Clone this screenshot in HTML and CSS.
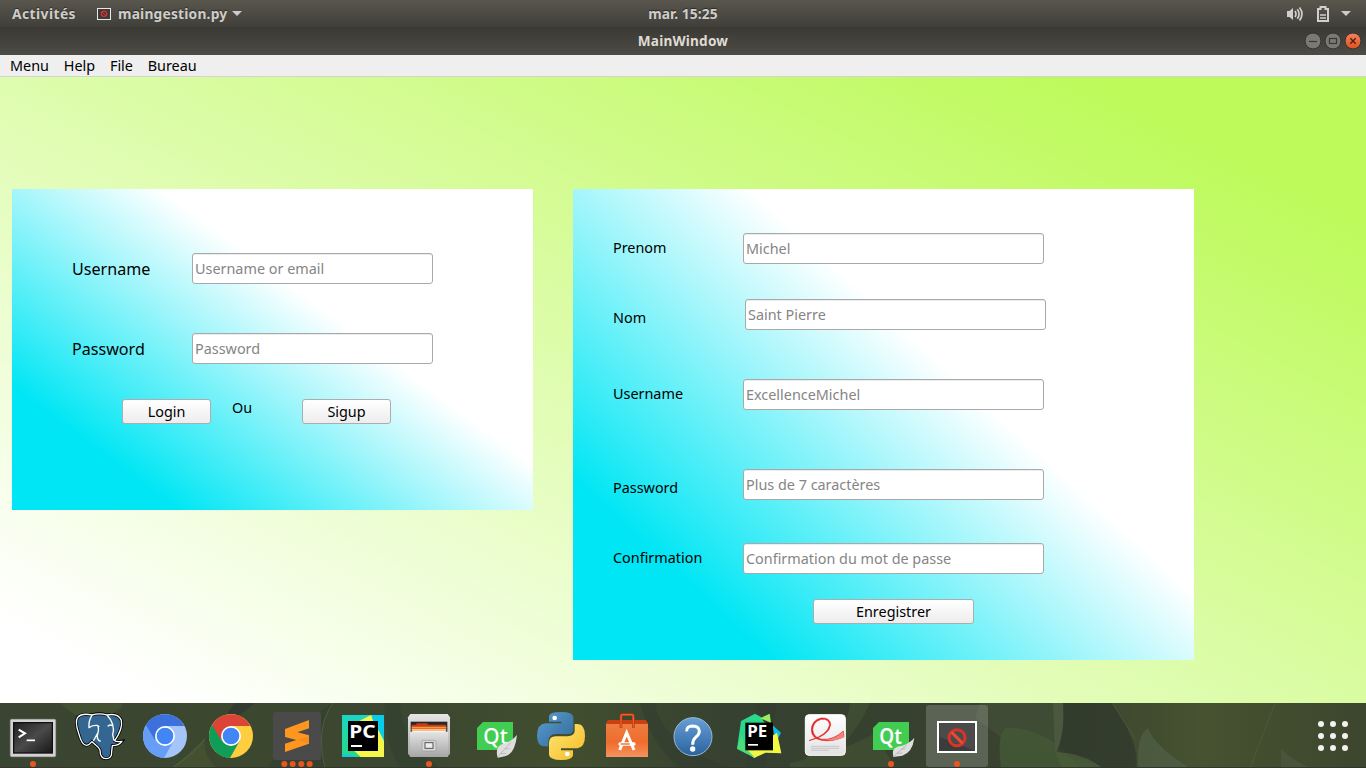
FILE: index.html
```html
<!DOCTYPE html>
<html lang="fr">
<head>
<meta charset="utf-8">
<title>MainWindow</title>
<link rel="stylesheet" href="styles.css">
</head>
<body>
<header class="topbar">
  <div class="topbar-left">
    <span class="activities">Activités</span>
    <svg class="app-icon" viewBox="0 0 14 12"><rect x=".5" y=".5" width="13" height="11" fill="#3b3b3b" stroke="#e8e8e8"/><circle cx="7" cy="5.8" r="2.7" fill="#54302d" stroke="#d8342d" stroke-width="1.2"/><path d="M5 4l4 4" stroke="#d8342d"/></svg>
    <span class="app-name">maingestion.py</span>
    <svg class="caret" viewBox="0 0 10 5"><path d="M0 0h10L5 5z" fill="#ccc"/></svg>
  </div>
  <span class="clock">mar. 15:25</span>
  <div class="tray">
    <svg width="18" height="16" viewBox="0 0 18 16"><path d="M1 5h2.500L7 2v12l-3.500-3H1z" fill="#cfcfcf"/><path d="M9 5q2 3 0 6M11.300 3.200q3.600 4.800 0 9.600M13.500 1.500q5 6.500 0 13" fill="none" stroke="#cfcfcf" stroke-width="1.700"/></svg>
    <svg width="12" height="16" viewBox="0 0 12 16"><path d="M1 15V3h2.500V1h5v2H11v12z" fill="none" stroke="#cfcfcf" stroke-width="2"/><path d="M3 9h6M3 12h6" stroke="#cfcfcf" stroke-width="1.400"/></svg>
    <svg class="caret" viewBox="0 0 10 5"><path d="M0 0h10L5 5z" fill="#ccc"/></svg>
  </div>
</header>
<div class="titlebar">
  <span class="title">MainWindow</span>
  <div class="controls">
    <svg viewBox="0 0 18 18"><circle cx="9" cy="9" r="8" fill="#7a7973" stroke="#34332f"/><path d="M5 9.500h8" stroke="#393834" stroke-width="1.200"/></svg>
    <svg viewBox="0 0 18 18"><circle cx="9" cy="9" r="8" fill="#7a7973" stroke="#34332f"/><rect x="5.500" y="6.500" width="7" height="5" fill="none" stroke="#393834" stroke-width="1.200"/></svg>
    <svg viewBox="0 0 18 18"><defs><linearGradient id="close" x2="0" y2="1"><stop stop-color="#f4835f"/><stop offset="1" stop-color="#e4501c"/></linearGradient></defs><circle cx="9" cy="9" r="8" fill="url(#close)" stroke="#34332f"/><path d="M6.300 6.300l5.400 5.400M11.700 6.300l-5.400 5.400" stroke="#4b2212" stroke-width="1.400"/></svg>
  </div>
</div>
<nav class="menubar"><span>Menu</span><span>Help</span><span>File</span><span>Bureau</span></nav>
<main class="workspace">
  <svg class="fill" preserveAspectRatio="none" viewBox="0 0 1 1"><defs><linearGradient id="lime" x1="0.04" y1="0.91" x2="0.91" y2="0.135"><stop stop-color="#fff"/><stop offset="1" stop-color="#bdfa5a"/></linearGradient></defs><rect width="1" height="1" fill="url(#lime)"/></svg>
  <section class="panel login">
    <svg class="fill" preserveAspectRatio="none" viewBox="0 0 1 1"><defs><linearGradient id="cyan" x1="0.159" y1="0.807" x2="0.63" y2="0.415"><stop stop-color="#00e6f4"/><stop offset="1" stop-color="#fff"/></linearGradient></defs><rect width="1" height="1" fill="url(#cyan)"/></svg>
    <div class="row"><label class="u">Username</label><input type="text" placeholder="Username or email"></div>
    <div class="row"><label class="p">Password</label><input type="text" placeholder="Password"></div>
    <div class="actions"><button>Login</button><span>Ou</span><button>Sigup</button></div>
  </section>
  <section class="panel register">
    <svg class="fill" preserveAspectRatio="none" viewBox="0 0 1 1"><rect width="1" height="1" fill="url(#cyan)"/></svg>
    <div class="row"><label>Prenom</label><input type="text" placeholder="Michel"></div>
    <div class="row nom"><label class="low">Nom</label><input type="text" placeholder="Saint Pierre"></div>
    <div class="row user"><label>Username</label><input type="text" placeholder="ExcellenceMichel"></div>
    <div class="row pass"><label class="low">Password</label><input type="text" placeholder="Plus de 7 caractères"></div>
    <div class="row conf"><label>Confirmation</label><input type="text" placeholder="Confirmation du mot de passe"></div>
    <button class="save">Enregistrer</button>
  </section>
</main>
<footer class="dock">
  <svg class="fill" preserveAspectRatio="none" viewBox="0 0 1366 65">
    <defs><linearGradient id="dockbg"><stop stop-color="#3a4432"/><stop offset=".15" stop-color="#3b472f"/><stop offset=".3" stop-color="#3b4730"/><stop offset=".42" stop-color="#414e2e"/><stop offset=".53" stop-color="#364131"/><stop offset=".62" stop-color="#36402f"/><stop offset=".78" stop-color="#39432f"/><stop offset=".88" stop-color="#465230"/><stop offset="1" stop-color="#3d462e"/></linearGradient></defs>
    <rect width="1366" height="65" fill="url(#dockbg)"/>
    <path d="M60 0Q90 30 122 4V0zM205 35Q190 50 172 65H216Q202 50 205 35z" fill="#4c5c34" opacity=".5"/>
    <path d="M235 0h20L206 38z" fill="#30342f" opacity=".7"/>
    <path d="M333 0Q315 25 325 65H268Q290 25 333 0zM385 0Q382 35 400 65H440Q400 35 400 0z" fill="#344131" opacity=".8"/>
    <path d="M333 0Q315 25 325 65M205 36Q195 50 172 65" fill="none" stroke="#65704f" opacity=".5"/>
    <path d="M640 0Q650 40 680 65H730Q660 40 655 0zM757 0h20l-12 65h-20z" fill="#2f3930" opacity=".5"/>
    <path d="M870 0Q850 45 810 65H790Q850 30 850 0zM790 60Q840 50 875 30L895 65H790z" fill="#4a5c37" opacity=".45"/>
    <path d="M980 0h84l-5 49H1020L975 15z" fill="#46543a" opacity=".55"/>
    <path d="M1001 65Q995 20 1013 25Q1050 27 1080 65z" fill="#435936" opacity=".8"/>
    <path d="M1053 0h10q3 35-8 50z" fill="#4a583d"/>
    <path d="M1112 0Q1140 40 1136 65H1105L1057 48Q1065 30 1063 0z" fill="#30392e" opacity=".75"/>
    <path d="M1055 49Q1085 50 1102 65H1062z" fill="#485c39" opacity=".8"/>
    <path d="M1138 65Q1136 33 1148 25Q1154 43 1190 65z" fill="#4e5d42" opacity=".85"/>
    <path d="M1112 0L1136 37M1275 0L1250 65" stroke="#5d6944" opacity=".45"/>
    <path d="M1281 65V45Q1290 56 1310 65z" fill="#4b563e" opacity=".8"/>
    <rect y="64" width="1366" height="1" fill="#33352f"/>
  </svg>
  <div class="apps">
    <svg viewBox="0 9 198 195"><defs><linearGradient id="term" x2="1" y2="1"><stop stop-color="#222"/><stop offset=".5" stop-color="#4a4a4a"/><stop offset="1" stop-color="#191919"/></linearGradient><linearGradient id="grey" x2="0" y2="1"><stop stop-color="#e5e5e5"/><stop offset="1" stop-color="#a5a5a5"/></linearGradient></defs><rect x="31" y="58" width="136" height="112" rx="4" fill="#d4d1d4" stroke="#aaa" stroke-width="2"/><rect x="39" y="66" width="120" height="95" fill="#111"/><rect x="43" y="70" width="112" height="87" fill="url(#term)"/><path d="M56 89l19 11-19 12" fill="none" stroke="#fff" stroke-width="6"/><path d="M80 121h25" stroke="#fff" stroke-width="5"/><circle class="dot" cx="99" cy="192" r="9"/></svg>
    <svg viewBox="198 9 198 195"><path d="M276 45Q246 38 233 52Q224 65 236 100Q246 137 260 136Q268 135 276 125L288 136Q296 142 300 150Q300 176 318 176Q336 176 335 155L337 137Q356 137 366 124Q348 127 344 122Q369 86 364 61Q354 38 321 45Q298 38 276 45z" fill="#336791" stroke="#000" stroke-width="9"/><path d="M276 45Q246 38 233 52Q224 65 236 100Q246 137 260 136Q268 135 276 125L288 136Q296 142 300 150Q300 176 318 176Q336 176 335 155L337 137Q356 137 366 124Q348 127 344 122Q369 86 364 61Q354 38 321 45Q298 38 276 45zM276 46Q265 62 267 83Q275 75 291 76Q298 82 294 98L280 123M294 98Q287 118 302 124M321 45Q347 73 338 104L342 122M323 79Q329 72 338 77M290 76Q295 76 298 81" fill="none" stroke="#fff" stroke-width="4" stroke-linejoin="round"/></svg>
    <svg viewBox="396 9 198 195"><circle cx="495" cy="108" r="66" fill="#a4c4fa"/><path d="M438 75A66 66 0 0 0 492 174L521 123 495 108z" fill="#669df6"/><path d="M438 75A66 66 0 0 1 553 78H495L465 120z" fill="#3c70dc"/><circle cx="495" cy="108" r="30" fill="#fff"/><circle cx="495" cy="108" r="25" fill="#4286f5"/></svg>
    <svg viewBox="594 9 198 195"><circle cx="693" cy="108" r="66" fill="#ffcd40"/><path d="M636 75A66 66 0 0 0 690 174L719 123 693 108z" fill="#109d58"/><path d="M636 75A66 66 0 0 1 751 78H693L663 120z" fill="#db4437"/><circle cx="693" cy="108" r="30" fill="#fff"/><circle cx="693" cy="108" r="25" fill="#4286f5"/></svg>
    <svg viewBox="12 9 198 195"><rect x="39" y="36" width="144" height="144" rx="8" fill="#4a4a4a"/><path d="M75 87L147 60V85L112 97 147 106V131L75 156V131L109 120 75 111z" fill="#ff9620"/><path d="M112 120l35-12v23z" fill="#e57c12" opacity=".3"/><g class="dot"><circle cx="73" cy="192" r="9"/><circle cx="98" cy="192" r="9"/><circle cx="124" cy="192" r="9"/><circle cx="149" cy="192" r="9"/></g></svg>
    <svg viewBox="210 9 198 195"><defs><linearGradient id="pcg" x2="0" y2="1"><stop stop-color="#1cd5c4"/><stop offset="1" stop-color="#26da86"/></linearGradient></defs><path d="M246 45H372V171H246z" fill="url(#pcg)"/><path d="M338 45h34v126h-30z" fill="#0bcbea"/><path d="M292 66L333 45 340 65 358 95 372 123V171H302L280 150H264z" fill="#f5f84a"/><path d="M246 160l55 11h-55z" fill="#18c9db"/><rect x="264" y="63" width="90" height="90"/><text x="268" y="114" class="logo" font-size="54" textLength="79" lengthAdjust="spacingAndGlyphs">PC</text><rect x="273" y="135" width="33" height="6" fill="#fff"/></svg>
    <svg viewBox="408 9 198 195"><path d="M444 52l7-10h112l7 10v109l-8 10H452l-8-10z" fill="url(#grey)"/><rect x="452" y="65" width="110" height="35" fill="#282828"/><path d="M455 74h12l4-4h30l4 4h53v24H455z" fill="#c73c16"/><path d="M455 80h104v5H455z" fill="#f79b39"/><path d="M455 86h104v6H455z" fill="#ffc477"/><path d="M457 92h100v5H457z" fill="#fff"/><rect x="450" y="95" width="114" height="76" fill="url(#grey)"/><rect x="486" y="121" width="42" height="32" rx="4" fill="#d6d6d6" stroke="#999" stroke-width="2"/><rect x="495" y="128" width="24" height="17" fill="#eee" stroke="#555" stroke-width="3"/><circle class="dot" cx="507" cy="192" r="9"/></svg>
    <svg viewBox="606 9 198 195"><path d="M669 66H759V150H651V84z" fill="#41cd52"/><text x="670" y="131" class="qt" textLength="73" lengthAdjust="spacingAndGlyphs">Qt</text><path d="M771 105Q765 163 735 169L713 173Q705 146 722 134Q752 128 771 105z" fill="#dedede"/><path d="M713 170L752 128M723 161l15-1M735 147l13-2" fill="none" stroke="#999" stroke-width="1.500"/></svg>
    <svg viewBox="9 9 198 195"><defs><linearGradient id="pyb" x2="1" y2="1"><stop stop-color="#5b9fd3"/><stop offset="1" stop-color="#306796"/></linearGradient><linearGradient id="pyy" x2="1" y2="1"><stop stop-color="#ffe874"/><stop offset="1" stop-color="#f4b925"/></linearGradient></defs><path d="M72 49Q73 36 107 36Q144 36 145 52V86Q145 101 131 102H92Q73 103 70 121V139H58Q36 138 36 107Q36 72 62 70H109V65H72z" fill="url(#pyb)"/><path d="M144 166Q143 180 109 180Q73 179 72 164V128Q73 109 92 109H128Q148 108 149 94V72H158Q180 73 180 108Q180 142 157 145H108V151H144z" fill="url(#pyy)"/><circle cx="89" cy="54" r="7" fill="#fff"/><circle cx="127" cy="162" r="7" fill="#fff"/></svg>
    <svg viewBox="207 9 198 195"><defs><linearGradient id="bag" x2="0" y2="1"><stop stop-color="#ee8146"/><stop offset=".6" stop-color="#ef6c2d"/><stop offset="1" stop-color="#f6935f"/></linearGradient></defs><path d="M250 60H361L369 72V171H243V72z" fill="url(#bag)"/><path d="M250 60H361L369 72H243z" fill="#c9410f"/><path d="M288 83V48Q288 44 295 44H318Q325 44 325 48V83" fill="none" stroke="#b9340d" stroke-width="8"/><path d="M288 82V48Q288 44 295 44H318Q325 44 325 48V82" fill="none" stroke="#ef6030" stroke-width="4"/><path d="M284 150L305 98 327 150" fill="none" stroke="#fff" stroke-width="9"/><rect x="280" y="127" width="52" height="10" rx="5" fill="#fff"/><path d="M287 132h27" stroke="#ed681e" stroke-width="4"/></svg>
    <svg viewBox="405 9 198 195"><defs><linearGradient id="help" x2="0" y2="1"><stop stop-color="#67a0d8"/><stop offset="1" stop-color="#29629d"/></linearGradient></defs><circle cx="504" cy="110" r="57" fill="url(#help)" stroke="#9cb9cf" stroke-width="3"/><path d="M485 94Q484 78 503 78Q523 79 523 94Q523 104 512 112Q503 119 503 134" fill="none" stroke="#fff" stroke-width="9"/><circle cx="503" cy="147" r="8" fill="#fff"/></svg>
    <svg viewBox="603 9 198 195"><path d="M648 63L690 41 708 51 735 95 690 174 636 146z" fill="#29d889"/><path d="M705 55L734 41 738 68z" fill="#98ee61"/><path d="M742 75L768 98 753 127z" fill="#0cbde7"/><path d="M660 150L699 135 756 98 769 160 722 158 687 174z" fill="#f2f744"/><path d="M636 146l13-42 14 42 28 28z" fill="#49dc7b"/><rect x="661" y="68" width="83" height="83"/><text x="667" y="110" class="logo" font-size="46" textLength="60" lengthAdjust="spacingAndGlyphs">PE</text><rect x="669" y="132" width="30" height="5" fill="#fff"/></svg>
    <svg viewBox="6 9 198 195"><defs><linearGradient id="paper" x2="0" y2="1"><stop stop-color="#fff"/><stop offset="1" stop-color="#e2e2e2"/></linearGradient></defs><rect x="46" y="44" width="120" height="122" rx="11" fill="url(#paper)" stroke="#fff" stroke-width="3"/><path d="M57 122Q113 105 119 74Q115 55 94 58Q69 65 68 89Q70 113 95 118Q130 121 160 93L162 110Q130 126 96 121Q65 116 64 90Q65 60 94 54Q119 52 122 73Q119 107 57 122z" fill="#e32222" stroke="#e32222" stroke-width="2"/><path d="M105 119Q135 119 160 93L162 112Q132 126 105 119z" fill="#f28480"/><path d="M63 139h85M63 145h85M63 151h54" stroke="#b6b6b6" stroke-width="2"/></svg>
    <svg viewBox="204 9 198 195"><path d="M267 66H357V150H249V84z" fill="#41cd52"/><text x="268" y="131" class="qt qt-bold" textLength="68" lengthAdjust="spacingAndGlyphs">Qt</text><path d="M373 114Q367 158 337 167L310 171Q304 147 322 140Q352 137 373 114z" fill="#dedede"/><path d="M311 169L350 135M321 160l16-1M333 148l13-2" fill="none" stroke="#999" stroke-width="1.500"/><circle class="dot" cx="303" cy="192" r="9"/></svg>
    <svg viewBox="402 9 198 195"><rect x="408" y="15" width="186" height="186" rx="9" fill="#fff" opacity=".18"/><rect x="444" y="66" width="114" height="90" fill="#3c3c3c" stroke="#fff" stroke-width="6"/><path d="M448 70h106v82L448 110z" fill="#fff" opacity=".08"/><circle cx="501" cy="113" r="24" fill="none" stroke="#d93426" stroke-width="9"/><path d="M484 96l34 34" stroke="#ed4936" stroke-width="9"/><circle class="dot" cx="501" cy="192" r="9"/></svg>
  </div>
  <svg class="show-apps" viewBox="0 0 30 30"><g fill="#f2f2f0"><circle cx="3" cy="3" r="3"/><circle cx="15" cy="3" r="3"/><circle cx="27" cy="3" r="3"/><circle cx="3" cy="15" r="3"/><circle cx="15" cy="15" r="3"/><circle cx="27" cy="15" r="3"/><circle cx="3" cy="27" r="3"/><circle cx="15" cy="27" r="3"/><circle cx="27" cy="27" r="3"/></g></svg>
</footer>
</body>
</html>
```
FILE: styles.css
```css
* { box-sizing: border-box; }
body {
  margin: 0;
  width: 1366px;
  height: 768px;
  overflow: hidden;
  display: flex;
  flex-direction: column;
  font: 14.4px "Noto Sans", "Open Sans", sans-serif;
  color: #000;
}
svg { display: block; flex: none; }
.fill { position: absolute; inset: 0; width: 100%; height: 100%; z-index: -1; }

.topbar {
  height: 27px;
  display: grid;
  grid-template-columns: 1fr auto 1fr;
  align-items: center;
  background: linear-gradient(#59564d, #403f3a);
  color: #cfcdc8;
  font-weight: 700;
  font-size: 13.8px;
  text-shadow: 0 -1px 1px #2b2a27;
}
.topbar-left { display: flex; align-items: center; padding-left: 12px; }
.activities { width: 85px; letter-spacing: .45px; }
.app-icon { width: 14px; height: 12px; margin-right: 7px; }
.app-name { width: 114px; letter-spacing: .2px; }
.clock { font-size: 13.8px; padding-bottom: 1px; letter-spacing: .1px; }
.caret { width: 10px; height: 5px; }
.tray { display: flex; align-items: center; justify-content: flex-end; padding-right: 15px; }
.tray svg:first-child { margin-right: 13px; }
.tray .caret { margin-left: 12px; }

.titlebar {
  height: 28px;
  display: grid;
  grid-template-columns: 1fr auto 1fr;
  align-items: center;
  background: linear-gradient(#3a3934, #4d4b45);
  color: #dfdbd2;
  font-weight: 700;
  font-size: 13.6px;
  letter-spacing: .2px;
}
.title { grid-column: 2; padding-bottom: 1px; }
.controls { display: flex; gap: 2px; justify-content: flex-end; padding-right: 4px; }
.controls svg { width: 18px; height: 18px; }

.menubar {
  height: 22px;
  display: flex;
  gap: 14.8px;
  padding-left: 10px;
  line-height: 21px;
  background: #efefef;
  border-bottom: 1px solid #d3d3d3;
}

.workspace {
  position: relative;
  z-index: 0;
  height: 626px;
  display: flex;
  align-items: flex-start;
  gap: 40px;
  padding: 112px 0 0 12px;
}
.panel { position: relative; z-index: 0; }
.row { display: flex; height: 31px; }
label { line-height: 30px; flex: none; }
input {
  height: 31px;
  margin: 0;
  padding: 0 2px;
  border: 1px solid #a9a9a9;
  border-radius: 3px;
  background: #fff;
  box-shadow: inset 0 1px #ececec;
  font: inherit;
}
input::placeholder { color: #858585; opacity: 1; }
button {
  height: 25px;
  padding: 0;
  border: 1px solid #adadad;
  border-radius: 3px;
  background: linear-gradient(#fff, #ededed);
  font: inherit;
  line-height: 23px;
  color: #000;
}
.login { width: 521px; height: 321px; padding: 64px 0 0 60px; }
.login .row { margin-bottom: 49px; }
.login .row + .row { margin-bottom: 35px; }
.login label { width: 120px; font-size: 16.1px; line-height: 32px; }
.login input { width: 241px; }
.actions { display: flex; padding-left: 50px; }
.actions button { width: 89px; }
.actions span { width: 91px; padding-left: 21px; line-height: 17px; }

.register { width: 621px; height: 471px; padding: 44px 0 0 40px; }
.register label { width: 130px; }
.register input { width: 301px; }
.register .low { padding-top: 4px; }
.nom { margin-top: 35px; }
.nom input { margin-left: 2px; }
.user { margin-top: 49px; }
.pass { margin-top: 59px; }
.conf { margin-top: 43px; }
.save { display: block; width: 161px; margin: 25px 0 0 200px; }

.dock {
  position: relative;
  z-index: 0;
  height: 65px;
  display: flex;
  align-items: center;
  justify-content: space-between;
  padding-right: 18px;
}
.apps { display: flex; }
.apps svg { width: 66px; height: 65px; }
.dot { fill: #e95420; }
.logo { fill: #fff; font-family: "Noto Sans", sans-serif; font-weight: 700; }
.qt { fill: #fff; font: 500 64px "Noto Sans", sans-serif; }
.qt-bold { font-weight: 600; }
.show-apps { width: 30px; height: 30px; }
```
